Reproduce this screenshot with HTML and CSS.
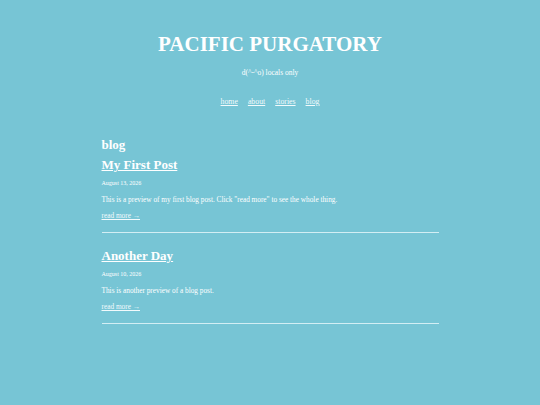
FILE: index.html
```html
<!DOCTYPE html>
<html>
<head>
<meta charset="utf-8">
<link rel="stylesheet" href="styles.css">
</head>
<body>
<header class="site-header">
  <h1 class="site-title">PACIFIC PURGATORY</h1>
  <p class="tagline">d(^-^o) locals only</p>
  <nav class="nav">
    <a href="#">home</a>
    <a href="#">about</a>
    <a href="#">stories</a>
    <a href="#">blog</a>
  </nav>
</header>
<main class="content">
  <h2 class="section-title">blog</h2>
  <article class="post">
    <h3 class="post-title"><a href="#">My First Post</a></h3>
    <p class="post-date">August 13, 2026</p>
    <p class="post-preview">This is a preview of my first blog post. Click "read more" to see the whole thing.</p>
    <a class="read-more" href="#">read more →</a>
  </article>
  <article class="post">
    <h3 class="post-title"><a href="#">Another Day</a></h3>
    <p class="post-date">August 10, 2026</p>
    <p class="post-preview">This is another preview of a blog post.</p>
    <a class="read-more" href="#">read more →</a>
  </article>
</main>
</body>
</html>
```
FILE: styles.css
```css
html, body {
  margin: 0;
  padding: 0;
}
body {
  background: #77c5d5;
  color: #ffffff;
  font-family: "Liberation Serif", "Times New Roman", serif;
  width: 540px;
  height: 405px;
}
.site-header {
  text-align: center;
  padding-top: 33px;
}
.site-title {
  margin: 0;
  font-size: 21px;
  font-weight: bold;
  line-height: 22px;
}
.tagline {
  margin: 13px 0 0 0;
  font-size: 7.5px;
  line-height: 10px;
}
.nav {
  margin-top: 19px;
  display: flex;
  justify-content: center;
  gap: 10px;
  font-size: 7.8px;
  line-height: 10px;
}
.nav a {
  color: #f2fafc;
  text-decoration: underline;
}
.content {
  width: 337px;
  margin: 0 auto;
  padding-top: 30px;
}
.section-title {
  margin: 0;
  font-size: 13px;
  line-height: 16px;
}
.post {
  border-bottom: 1px solid #d3eef4;
  padding-bottom: 10px;
  margin-bottom: 15px;
}
.post-title {
  margin: 4px 0 0 0;
  font-size: 13px;
  line-height: 16px;
}
.post-title a {
  color: #ffffff;
  text-decoration: underline;
}
.post-date {
  margin: 6px 0 0 0;
  font-size: 6px;
  line-height: 8px;
}
.post-preview {
  margin: 8px 0 0 0;
  font-size: 7.3px;
  line-height: 9px;
}
.read-more {
  display: inline-block;
  margin-top: 6px;
  font-size: 7.3px;
  line-height: 9px;
  color: #f2fafc;
  text-decoration: underline;
}
```
